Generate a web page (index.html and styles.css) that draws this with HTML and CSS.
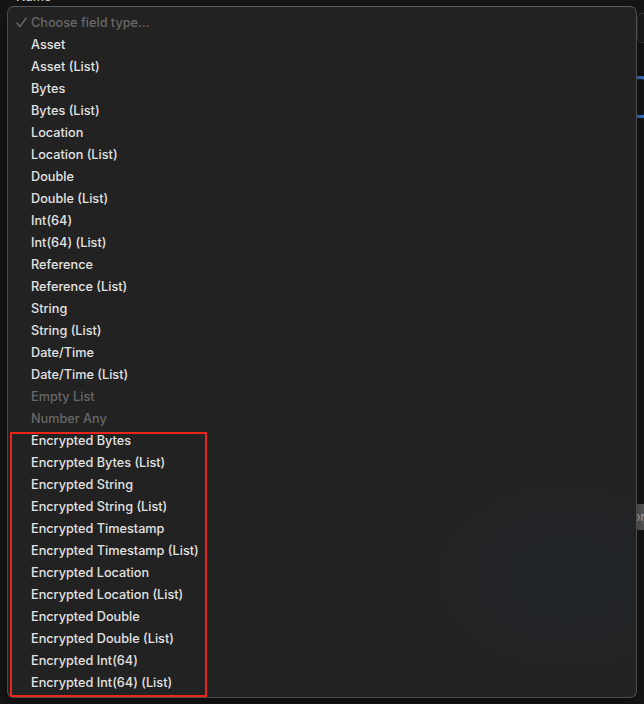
FILE: index.html
```html
<!DOCTYPE html>
<html>
<head>
<meta charset="utf-8">
<link rel="stylesheet" href="styles.css">
</head>
<body>
<div class="backdrop">
  <div class="name-label">Name</div>
  <div class="bg-field"></div>
  <div class="bg-ring"></div>
  <div class="bg-button">None</div>
</div>
<div class="menu">
  <div class="item disabled"><svg class="check" width="11" height="11" viewBox="0 0 11 11"><path d="M1 6.1 L3.9 9.6 L10 1.2" fill="none" stroke="#686868" stroke-width="1.5" stroke-linecap="round" stroke-linejoin="round"/></svg>Choose field type...</div>
  <div class="item">Asset</div>
  <div class="item">Asset (List)</div>
  <div class="item">Bytes</div>
  <div class="item">Bytes (List)</div>
  <div class="item">Location</div>
  <div class="item">Location (List)</div>
  <div class="item">Double</div>
  <div class="item">Double (List)</div>
  <div class="item">Int(64)</div>
  <div class="item">Int(64) (List)</div>
  <div class="item">Reference</div>
  <div class="item">Reference (List)</div>
  <div class="item">String</div>
  <div class="item">String (List)</div>
  <div class="item">Date/Time</div>
  <div class="item">Date/Time (List)</div>
  <div class="item disabled">Empty List</div>
  <div class="item disabled">Number Any</div>
  <div class="item">Encrypted Bytes</div>
  <div class="item">Encrypted Bytes (List)</div>
  <div class="item">Encrypted String</div>
  <div class="item">Encrypted String (List)</div>
  <div class="item">Encrypted Timestamp</div>
  <div class="item">Encrypted Timestamp (List)</div>
  <div class="item">Encrypted Location</div>
  <div class="item">Encrypted Location (List)</div>
  <div class="item">Encrypted Double</div>
  <div class="item">Encrypted Double (List)</div>
  <div class="item">Encrypted Int(64)</div>
  <div class="item">Encrypted Int(64) (List)</div>
</div>
<div class="highlight"></div>
</body>
</html>
```

FILE: styles.css
```css
html, body {
  margin: 0;
  padding: 0;
  width: 644px;
  height: 704px;
  overflow: hidden;
  background: #161616;
  font-family: "Inter", "Liberation Sans", sans-serif;
  font-size: 12.7px;
  font-weight: 500;
}

.backdrop {
  position: relative;
  width: 644px;
  height: 704px;
}

.name-label {
  position: absolute;
  left: 16px;
  top: -11px;
  color: #d0d0d0;
}

.bg-field {
  position: absolute;
  left: 637px;
  top: 13px;
  width: 40px;
  height: 28px;
  border: 1px solid #3a3a3a;
  border-radius: 5px;
  background: #1b1b1b;
}

.bg-ring {
  position: absolute;
  left: 619px;
  top: 76px;
  width: 42px;
  height: 42px;
  box-sizing: border-box;
  border: 3px solid #3b7ad0;
  border-radius: 50%;
}

.bg-button {
  position: absolute;
  left: 637px;
  top: 504px;
  width: 60px;
  height: 26px;
  background: #5a5a5a;
  color: #a8a8a8;
  line-height: 26px;
  text-indent: -14px;
}

.menu {
  position: absolute;
  left: 7px;
  top: 6px;
  width: 628px;
  height: 680px;
  padding: 5px 0;
  border: 1px solid #4e4e4e;
  border-top-color: #5a5a5a;
  border-radius: 7px;
  background:
    radial-gradient(ellipse 170px 120px at 560px 570px, rgba(32, 37, 42, 0.9), rgba(34, 34, 34, 0) 100%),
    #222222;
  box-shadow: 0 4px 14px rgba(0, 0, 0, 0.5);
}

.item {
  position: relative;
  height: 22px;
  line-height: 21px;
  padding-left: 23px;
  color: #e2e2e2;
  white-space: nowrap;
}

.item.disabled {
  color: #686868;
}

.check {
  position: absolute;
  left: 8px;
  top: 5px;
}

.highlight {
  position: absolute;
  left: 10px;
  top: 432px;
  width: 193px;
  height: 261px;
  border: 2px solid #e8261c;
}
```
